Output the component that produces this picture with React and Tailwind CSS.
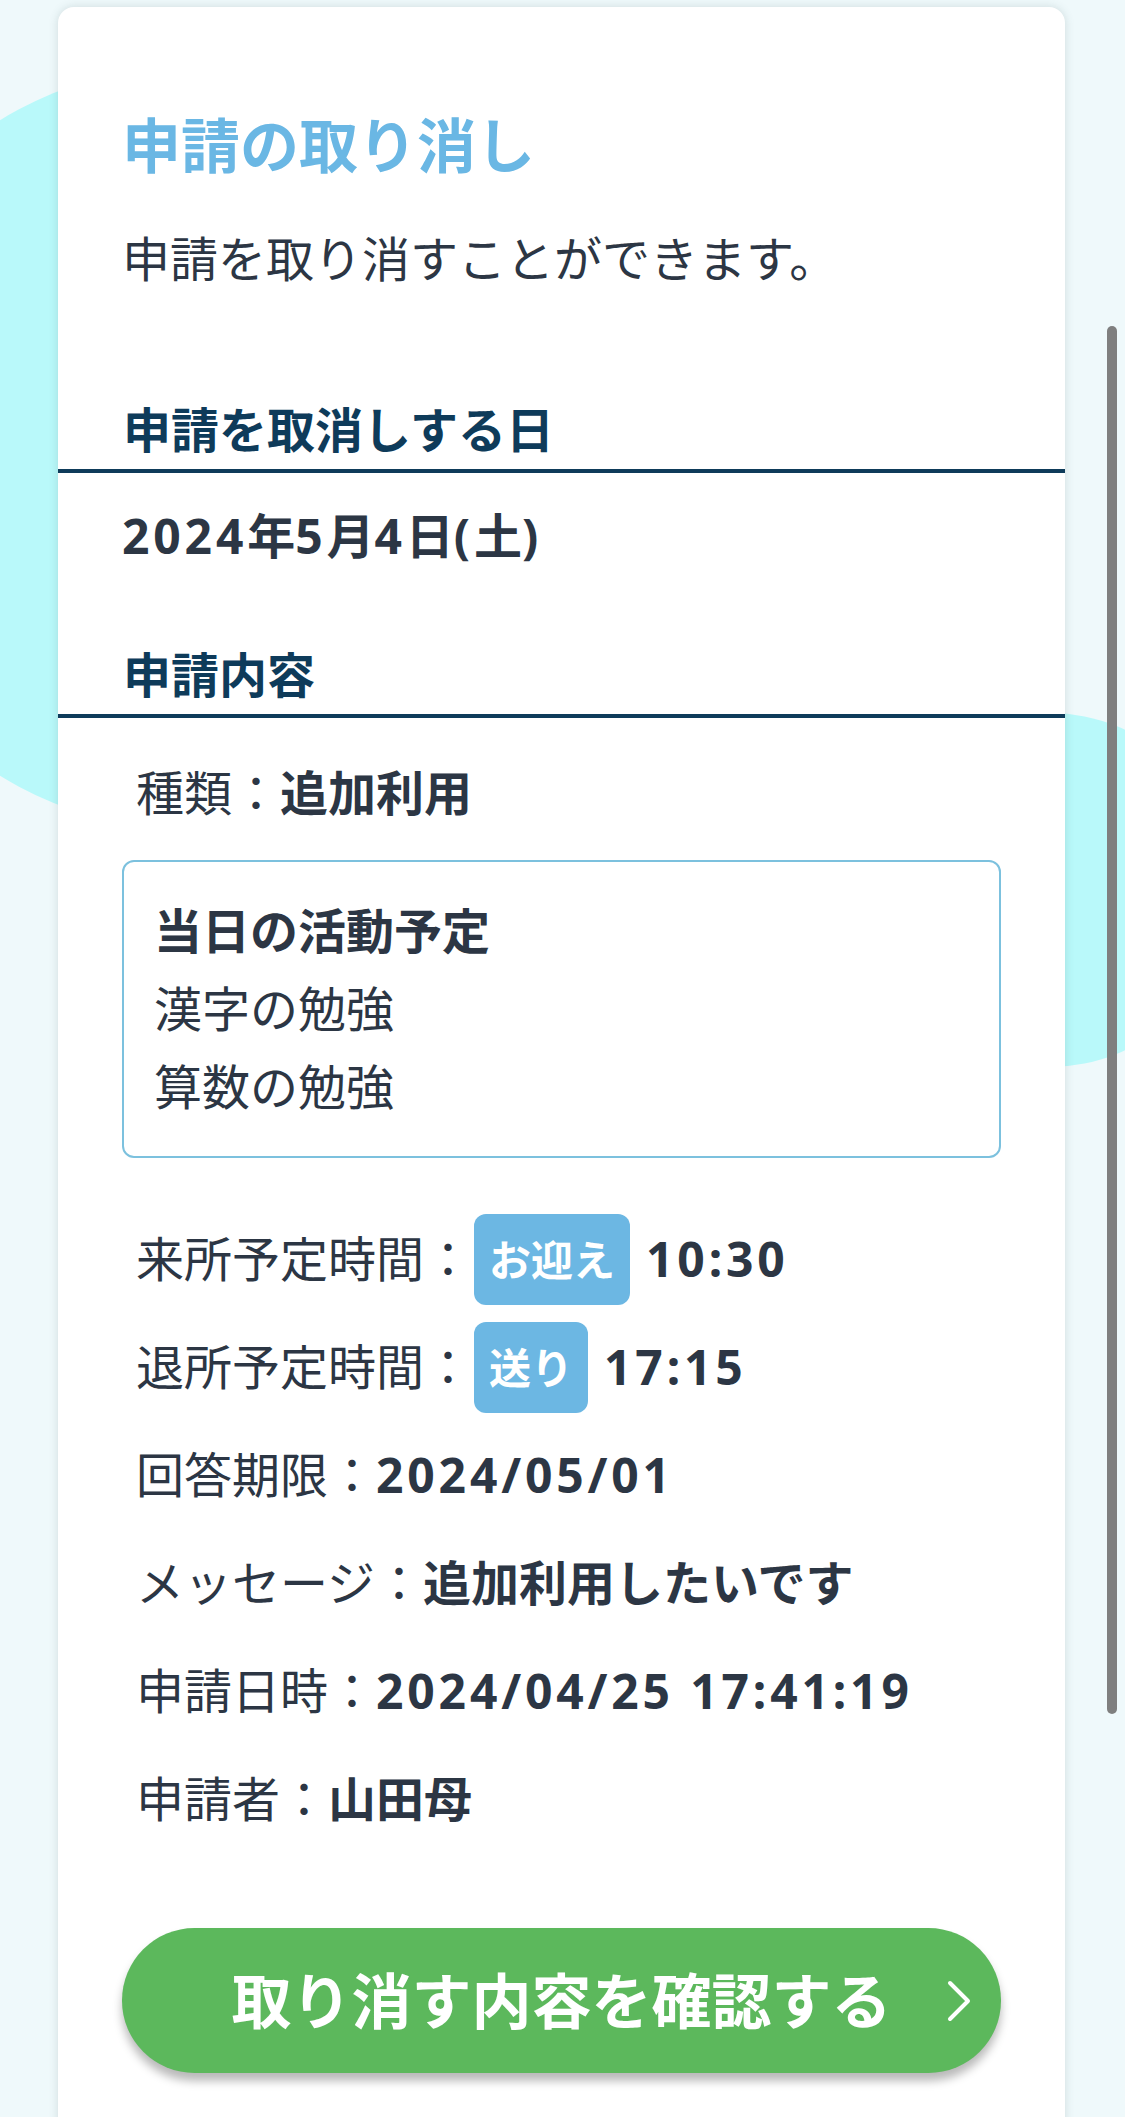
import React from "react";

const FONT = { fontFamily: '"Noto Sans", "Noto Sans CJK JP", sans-serif' };

const Row = ({ label, children }) => (
  <div className="flex h-[108px] items-center text-[48px] text-[#2c3644]">
    <span>{label}：</span>
    {children}
  </div>
);

const Badge = ({ children }) => (
  <span className="ml-[2px] mr-[16px] flex h-[91px] items-center rounded-[12px] bg-[#6cb7e3] px-[15px] text-[42px] font-bold text-white">
    {children}
  </span>
);

const Num = ({ children }) => (
  <span className="font-bold tracking-[0.08em]">{children}</span>
);

const SectionHeading = ({ children }) => (
  <div className="border-b-4 border-[#0e3b5a] px-[65px] pb-[7px]">
    <h2 className="text-[48px] font-bold leading-[64px] text-[#0e3b5a]">
      {children}
    </h2>
  </div>
);

export default function App() {
  return (
    <div
      className="relative h-[2117px] w-[1125px] overflow-hidden bg-[#eff9fb]"
      style={FONT}
    >
      {/* background blobs */}
      <div className="absolute left-[-184px] top-[64px] h-[768px] w-[768px] rounded-full bg-[#b9f9fa]" />
      <div className="absolute left-[873px] top-[713px] h-[354px] w-[354px] rounded-full bg-[#b9f9fa]" />

      <div className="relative z-10 pl-[58px] pr-[60px] pt-[7px]">
        <div className="min-h-[2200px] rounded-t-[16px] bg-white pt-[98px] shadow-[0_0_10px_rgba(60,90,90,0.18)]">
          <div className="px-[64px]">
            <h1 className="text-[59px] font-bold leading-[80px] text-[#6ab7e4]">
              申請の取り消し
            </h1>
            <p className="mt-[39px] text-[48px] leading-[70px] text-[#2c3644]">
              申請を取り消すことができます。
            </p>
          </div>

          <div className="mt-[104px]">
            <SectionHeading>申請を取消しする日</SectionHeading>
          </div>
          <p className="mt-[28px] px-[64px] text-[48px] font-bold leading-[70px] text-[#2c3644]">
            <span className="tracking-[0.08em]">2024</span>年
            <span className="tracking-[0.08em]">5</span>月
            <span className="tracking-[0.08em]">4</span>日
            <span className="tracking-[0.08em]">(</span>土
            <span className="tracking-[0.08em]">)</span>
          </p>

          <div className="mt-[72px]">
            <SectionHeading>申請内容</SectionHeading>
          </div>

          <div className="mt-[40px] pl-[78px] text-[48px] leading-[70px] text-[#2c3644]">
            種類：<span className="font-bold">追加利用</span>
          </div>

          <div className="mx-[64px] mt-[32px] rounded-[12px] border-2 border-[#7cc1de] px-[30px] py-[30px] text-[48px] leading-[78px] text-[#2c3644]">
            <div className="font-bold">当日の活動予定</div>
            <div>漢字の勉強</div>
            <div>算数の勉強</div>
          </div>

          <div className="mt-[47px] pl-[78px]">
            <Row label="来所予定時間">
              <Badge>お迎え</Badge>
              <Num>10:30</Num>
            </Row>
            <Row label="退所予定時間">
              <Badge>送り</Badge>
              <Num>17:15</Num>
            </Row>
            <Row label="回答期限">
              <Num>2024/05/01</Num>
            </Row>
            <Row label="メッセージ">
              <span className="font-bold">追加利用したいです</span>
            </Row>
            <Row label="申請日時">
              <Num>2024/04/25 17:41:19</Num>
            </Row>
            <Row label="申請者">
              <span className="font-bold">山田母</span>
            </Row>
          </div>

          <button className="relative mx-[64px] mt-[75px] flex h-[145px] w-[879px] items-center justify-center rounded-full bg-[#5cb85c] text-[60px] font-bold text-white shadow-[0_8px_10px_rgba(0,0,0,0.28)]">
            取り消す内容を確認する
            <svg
              className="absolute right-[30px] top-1/2 -translate-y-1/2"
              width="24"
              height="42"
              viewBox="0 0 24 42"
              fill="none"
              stroke="white"
              strokeWidth="4"
              strokeLinecap="round"
              strokeLinejoin="round"
            >
              <polyline points="3,3 21,21 3,39" />
            </svg>
          </button>
        </div>
      </div>

      {/* scrollbar overlay */}
      <div className="absolute left-[1107px] top-[326px] z-20 h-[1388px] w-[10px] rounded-full bg-[#7f7f7f]" />
    </div>
  );
}
